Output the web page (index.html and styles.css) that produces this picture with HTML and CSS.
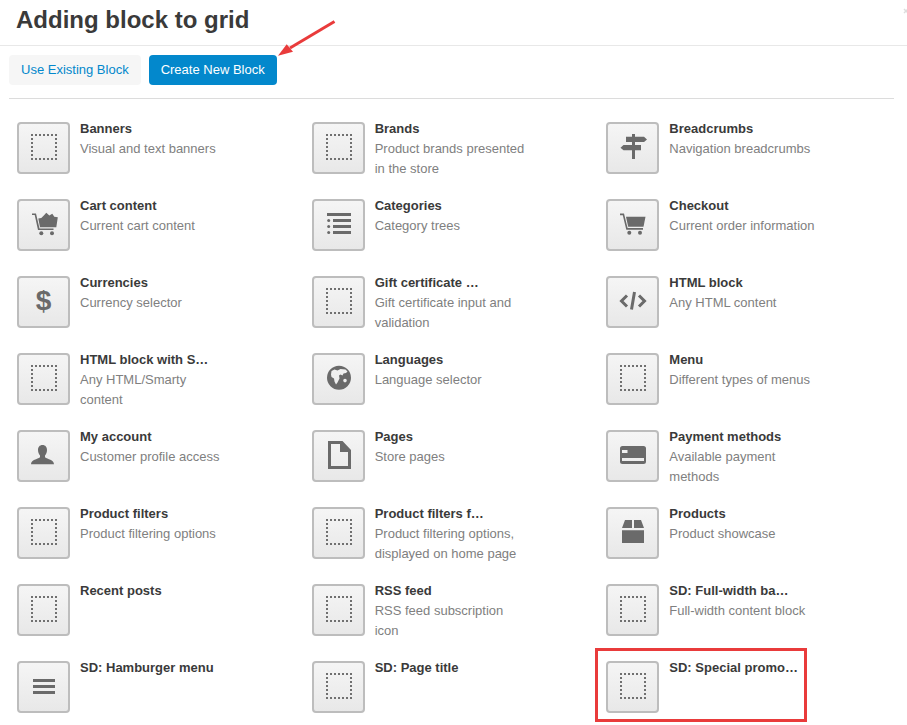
FILE: index.html
```html
<!DOCTYPE html>
<html lang="en">
<head>
<meta charset="utf-8">
<title>Adding block to grid</title>
<link rel="stylesheet" href="styles.css">
</head>
<body>
<header class="head"><h1 class="title">Adding block to grid</h1></header>
<nav class="tabs">
  <a class="tab">Use Existing Block</a>
  <a class="tab tab-active">Create New Block</a>
</nav>
<div class="rule"></div>
<main class="grid">
  <div class="item"><div class="tile"><svg class="ico" viewBox="0 0 49 48"><rect class="dots" x="13" y="11" width="24" height="24"/></svg></div><div class="info"><div class="name">Banners</div><div class="desc">Visual and text banners</div></div></div>
  <div class="item"><div class="tile"><svg class="ico" viewBox="0 0 49 48"><rect class="dots" x="13" y="11" width="24" height="24"/></svg></div><div class="info"><div class="name">Brands</div><div class="desc">Product brands presented in the store</div></div></div>
  <div class="item"><div class="tile"><svg class="ico" viewBox="0 0 49 48"><path d="M24 10h3v25h-3zM18 12.700h18l3 2.700-3 2.700H18zM15.500 21H33v5.300H15.500l-3-2.650z"/></svg></div><div class="info"><div class="name">Breadcrumbs</div><div class="desc">Navigation breadcrumbs</div></div></div>

  <div class="item"><div class="tile"><svg class="ico" viewBox="0 0 49 48"><path d="M13 12.500h4l3.500 15h14v1.500H19L15.700 14H13z"/><path d="M19.300 17.500l3-.5 2.500-2.500 2.500-2.800 3 2.800 3-1.800 2 3 3.500.5-1.500 10H21z"/><circle cx="22.300" cy="32.300" r="2"/><circle cx="33" cy="32.300" r="2"/></svg></div><div class="info"><div class="name">Cart content</div><div class="desc">Current cart content</div></div></div>
  <div class="item"><div class="tile"><svg class="ico" viewBox="0 0 49 48"><path d="M13 12h24v3H13zM19 18h18v3H19zM19 24h18v3H19zM19 30h18v3H19z"/><circle cx="14.700" cy="19.400" r="1.500"/><circle cx="14.700" cy="25.400" r="1.500"/><circle cx="14.700" cy="31.400" r="1.500"/></svg></div><div class="info"><div class="name">Categories</div><div class="desc">Category trees</div></div></div>
  <div class="item"><div class="tile"><svg class="ico" viewBox="0 0 49 48"><path d="M12 12.500h4l3.600 14.500h15.400v1.700H18.300L14.800 14.200H12z"/><path d="M18 15.700h19.500l-2 10H20.200z"/><circle cx="21.300" cy="31.700" r="2"/><circle cx="32" cy="31.700" r="2"/></svg></div><div class="info"><div class="name">Checkout</div><div class="desc">Current order information</div></div></div>

  <div class="item"><div class="tile"><svg class="ico" viewBox="0 0 49 48"><text class="glyph" x="24.500" y="31.500">$</text></svg></div><div class="info"><div class="name">Currencies</div><div class="desc">Currency selector</div></div></div>
  <div class="item"><div class="tile"><svg class="ico" viewBox="0 0 49 48"><rect class="dots" x="13" y="11" width="24" height="24"/></svg></div><div class="info"><div class="name">Gift certificate …</div><div class="desc">Gift certificate input and validation</div></div></div>
  <div class="item"><div class="tile"><svg class="ico" viewBox="0 0 49 48"><path class="line" d="M19 17.500l-5.500 5.500 5.500 5.500M31 17.500l5.500 5.500-5.500 5.500M26.500 14l-3 17.500"/></svg></div><div class="info"><div class="name">HTML block</div><div class="desc">Any HTML content</div></div></div>

  <div class="item"><div class="tile"><svg class="ico" viewBox="0 0 49 48"><rect class="dots" x="13" y="11" width="24" height="24"/></svg></div><div class="info"><div class="name">HTML block with S…</div><div class="desc">Any HTML/Smarty content</div></div></div>
  <div class="item"><div class="tile"><svg class="ico" viewBox="0 0 49 48"><path fill-rule="evenodd" d="M25 10.700a12 12 0 1 1 0 24 12 12 0 0 1 0-24zM17.500 16l3-1.500 3 1 3-1.500 5 .5 2 2-1.500 1.500-2.500.5-1 2-2-1-1.500 1 .5 3-2 4-1.500 2-1.500-3-.5-3-2.500-1.500-.5-2.500zM31 23.800a1.800 1.800 0 1 1 0 3.600 1.800 1.800 0 0 1 0-3.600z"/></svg></div><div class="info"><div class="name">Languages</div><div class="desc">Language selector</div></div></div>
  <div class="item"><div class="tile"><svg class="ico" viewBox="0 0 49 48"><rect class="dots" x="13" y="11" width="24" height="24"/></svg></div><div class="info"><div class="name">Menu</div><div class="desc">Different types of menus</div></div></div>

  <div class="item"><div class="tile"><svg class="ico" viewBox="0 0 49 48"><path d="M23.500 13c3 0 4.500 2.300 4.500 5 0 2.500-1 4.300-2 5.500v1.800c2.500 2.200 9 2.300 9 7H12c0-4.700 6.500-4.800 9-7v-1.800c-1-1.200-2-3-2-5.500 0-2.700 1.500-5 4.500-5z"/></svg></div><div class="info"><div class="name">My account</div><div class="desc">Customer profile access</div></div></div>
  <div class="item"><div class="tile"><svg class="ico" viewBox="0 0 49 48"><path fill-rule="evenodd" d="M14 9h14.500L37 18v19H14zM17 12v22h17V20h-8v-8z"/></svg></div><div class="info"><div class="name">Pages</div><div class="desc">Store pages</div></div></div>
  <div class="item"><div class="tile"><svg class="ico" viewBox="0 0 49 48"><path fill-rule="evenodd" d="M14.500 14h21a2.500 2.500 0 0 1 2.500 2.500v13a2.500 2.500 0 0 1-2.500 2.500h-21a2.500 2.500 0 0 1-2.500-2.500v-13a2.500 2.500 0 0 1 2.500-2.500zM14 18v3h5.500v-3zM14 26v3h22v-3z"/></svg></div><div class="info"><div class="name">Payment methods</div><div class="desc">Available payment methods</div></div></div>

  <div class="item"><div class="tile"><svg class="ico" viewBox="0 0 49 48"><rect class="dots" x="13" y="11" width="24" height="24"/></svg></div><div class="info"><div class="name">Product filters</div><div class="desc">Product filtering options</div></div></div>
  <div class="item"><div class="tile"><svg class="ico" viewBox="0 0 49 48"><rect class="dots" x="13" y="11" width="24" height="24"/></svg></div><div class="info"><div class="name">Product filters f…</div><div class="desc">Product filtering options, displayed on home page</div></div></div>
  <div class="item"><div class="tile"><svg class="ico" viewBox="0 0 49 48"><path d="M14 21.300h22V34H14zM17 11h7v8H14zM26 11h7l3 8H26z"/></svg></div><div class="info"><div class="name">Products</div><div class="desc">Product showcase</div></div></div>

  <div class="item"><div class="tile"><svg class="ico" viewBox="0 0 49 48"><rect class="dots" x="13" y="11" width="24" height="24"/></svg></div><div class="info"><div class="name">Recent posts</div></div></div>
  <div class="item"><div class="tile"><svg class="ico" viewBox="0 0 49 48"><rect class="dots" x="13" y="11" width="24" height="24"/></svg></div><div class="info"><div class="name">RSS feed</div><div class="desc">RSS feed subscription icon</div></div></div>
  <div class="item"><div class="tile"><svg class="ico" viewBox="0 0 49 48"><rect class="dots" x="13" y="11" width="24" height="24"/></svg></div><div class="info"><div class="name">SD: Full-width ba…</div><div class="desc">Full-width content block</div></div></div>

  <div class="item"><div class="tile"><svg class="ico" viewBox="0 0 49 48"><path d="M14 16h22v3H14zM14 22h22v3H14zM14 28h22v3H14z"/></svg></div><div class="info"><div class="name">SD: Hamburger menu</div></div></div>
  <div class="item"><div class="tile"><svg class="ico" viewBox="0 0 49 48"><rect class="dots" x="13" y="11" width="24" height="24"/></svg></div><div class="info"><div class="name">SD: Page title</div></div></div>
  <div class="item"><div class="tile"><svg class="ico" viewBox="0 0 49 48"><rect class="dots" x="13" y="11" width="24" height="24"/></svg></div><div class="info"><div class="name">SD: Special promo…</div></div></div>
</main>
<svg class="arrow" viewBox="0 0 60 40" aria-hidden="true"><path class="arrow-line" d="M56.500 1.500L12 28"/><path class="arrow-head" d="M0 35.700L8.700 24.300l6.300 7.400z"/></svg>
<div class="mark" aria-hidden="true"></div>
<svg class="close" viewBox="0 0 6 6" aria-hidden="true"><path d="M1 1l4 4M5 1L1 5"/></svg>
</body>
</html>
```
FILE: styles.css
```css
html, body {
  margin: 0;
  height: 725px;
  overflow: hidden;
  background: #fff;
}
body {
  position: relative;
  font-family: "Liberation Sans", Arial, sans-serif;
  font-size: 13px;
  line-height: 20px;
  color: #3a3a3a;
}
.head {
  height: 45px;
  border-bottom: 1px solid #e8e8e8;
  padding-left: 16px;
  box-sizing: content-box;
}
.title {
  margin: 0;
  font-size: 24px;
  line-height: 40px;
  font-weight: bold;
  color: #3a3a3a;
}
.tabs {
  display: flex;
  gap: 8px;
  padding: 9px 0 0 9px;
}
.tab {
  display: block;
  height: 30px;
  line-height: 30px;
  padding: 0 12px;
  border-radius: 4px;
  background: #f6f6f6;
  color: #0388cc;
}
.tab-active {
  background: #0388cc;
  color: #fff;
}
.rule {
  height: 1px;
  margin: 13px 13px 0 9px;
  background: #dcdcdc;
}
.grid {
  display: grid;
  grid-template-columns: repeat(3, 294.67px);
  grid-auto-rows: 60px;
  row-gap: 17px;
  padding: 20px 0 0 17px;
}
.item {
  display: flex;
  gap: 10px;
  align-items: flex-start;
}
.tile {
  flex: none;
  width: 49px;
  height: 48px;
  margin-top: 3px;
  border: 2px solid #bdbdbd;
  border-radius: 4px;
  background: linear-gradient(#f5f5f5, #e8e8e8);
}
.ico {
  display: block;
  width: 49px;
  height: 48px;
  fill: #6a6a6a;
}
.dots {
  fill: none;
  stroke: #707070;
  stroke-width: 2;
  stroke-dasharray: 2 2;
  stroke-dashoffset: 1;
}
.line {
  fill: none;
  stroke: #6a6a6a;
  stroke-width: 3;
}
.glyph {
  font-family: "Liberation Sans", Arial, sans-serif;
  font-size: 28px;
  font-weight: bold;
  text-anchor: middle;
}
.info {
  width: 152px;
}
.name {
  font-weight: bold;
  white-space: nowrap;
}
.desc {
  color: #808080;
}
.arrow {
  position: absolute;
  left: 278px;
  top: 20px;
  width: 60px;
  height: 40px;
}
.arrow-line {
  fill: none;
  stroke: #e93b3b;
  stroke-width: 3;
}
.arrow-head {
  fill: #e93b3b;
}
.mark {
  position: absolute;
  left: 595px;
  top: 648px;
  width: 206px;
  height: 68px;
  border: 3px solid #e93b3b;
}
.close {
  position: absolute;
  left: 903px;
  top: 8px;
  width: 6px;
  height: 6px;
  fill: none;
  stroke: #ddd;
  stroke-width: 1.5;
}
```
